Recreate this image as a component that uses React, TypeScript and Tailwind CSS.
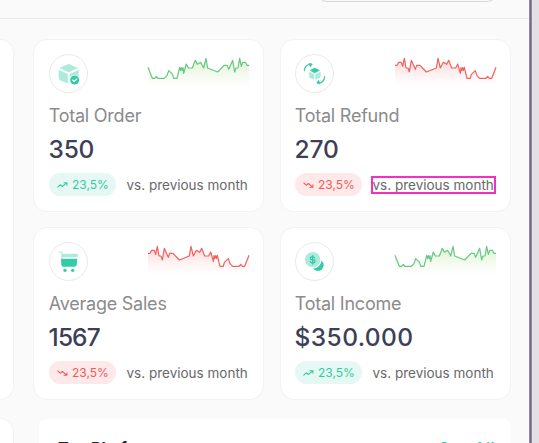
import type { ReactNode } from 'react';

const RISING: [number, number][] = [
  [24, 97], [37, 130], [44, 130], [49, 124], [54, 130], [73, 130], [81, 122], [86, 107], [98, 118], [101, 130],
  [111, 130], [119, 97], [122, 107], [124, 98], [127, 106], [129, 98], [131, 115], [139, 87], [145, 99], [157, 99],
  [166, 76], [172, 88], [182, 82], [191, 99], [198, 70], [203, 99], [233, 111], [252, 91], [262, 91], [266, 103],
  [278, 76], [284, 111], [288, 99], [294, 99], [299, 70], [304, 94], [308, 82], [316, 82], [321, 91], [327, 91],
];
const FALLING = RISING.map(([x, y]): [number, number] => [351 - x, y]).reverse();

function Sparkline({ up, id }: { up: boolean; id: string }) {
  const line = (up ? RISING : FALLING).map((p) => p.join(',')).join(' ');
  return (
    <svg className="mt-[3px] h-[30px] w-[101px] overflow-visible" viewBox="24 66 303 90">
      <defs>
        <linearGradient id={id} x1="0" y1="0" x2="0" y2="1">
          <stop offset="0" stopColor={up ? '#d9edc0' : '#fbc9c9'} stopOpacity="0.85" />
          <stop offset="1" stopColor={up ? '#e8f5dc' : '#fdeaea'} stopOpacity="0" />
        </linearGradient>
      </defs>
      <polygon points={`24,156 ${line} 327,156`} fill={`url(#${id})`} />
      <polyline points={line} fill="none" stroke={up ? '#62c982' : '#f0625f'} strokeWidth="3.6" strokeLinejoin="round" />
    </svg>
  );
}

function TrendIcon({ up }: { up: boolean }) {
  return (
    <svg className="h-[8px] w-[11px]" viewBox="0 0 11 8" fill="none" stroke="currentColor" strokeWidth="1.1" strokeLinecap="round" strokeLinejoin="round">
      <g transform={up ? undefined : 'matrix(1 0 0 -1 0 8)'}>
        <path d="M.8 6.2 3.2 3.8 5.4 5.5 9.6 1.9M7 1.7h2.9v2.6" />
      </g>
    </svg>
  );
}

const boxIcon = (
  <svg className="size-[37px]" viewBox="0 0 111 111">
    <g fill="#aeeadb" stroke="#aeeadb" strokeWidth="2" strokeLinejoin="round">
      <path d="M30 39 56 28 82 39 56 51Z" />
      <path d="M27 46 53 58V84L30 75Q27 73 27 70Z" />
      <path d="M85 46 60 58V84L82 75Q85 73 85 70Z" />
    </g>
    <circle cx="74" cy="75" r="15.5" fill="#fff" />
    <circle cx="74" cy="75" r="13.5" fill="#35cba9" />
    <path d="m68 75 4.5 4.5 8-8" fill="none" stroke="#fff" strokeWidth="3.5" strokeLinecap="round" strokeLinejoin="round" />
  </svg>
);

const refundIcon = (
  <svg className="size-[37px]" viewBox="0 0 111 111">
    <path d="M43 46 56 39 70 46 56 54Z" fill="#35cba9" stroke="#35cba9" strokeWidth="2" strokeLinejoin="round" />
    <g fill="#aeeadb" stroke="#aeeadb" strokeWidth="2" strokeLinejoin="round">
      <path d="M40 52 54 58V73L42 68Q40 67 40 64Z" />
      <path d="M73 52 59 58V73L71 68Q73 67 73 64Z" />
    </g>
    <g fill="none" stroke="#35cba9" strokeWidth="3.5" strokeLinecap="round">
      <path d="M25 47C26 36 33 28 44 28M86 65C85 76 78 84 67 84" />
    </g>
    <path d="m39 25 10 2-6 9ZM72 87l-10-3 6-8Z" fill="#35cba9" stroke="#35cba9" strokeWidth="2" strokeLinejoin="round" />
  </svg>
);

const cartIcon = (
  <svg className="size-[37px]" viewBox="0 0 111 111">
    <path d="M27 27H33Q36 28 36 33V46" fill="none" stroke="#aeeadb" strokeWidth="3.5" strokeLinecap="round" />
    <path d="M35 32H80Q84 32 84 36L83 43H35Z" fill="#aeeadb" />
    <path d="M33 47H82L80 66Q79 71 73 71H40Q35 71 34 66Z" fill="#35cba9" />
    <circle cx="45" cy="82" r="5" fill="#35cba9" />
    <circle cx="68" cy="82" r="5" fill="#35cba9" />
  </svg>
);

const coinIcon = (
  <svg className="size-[37px]" viewBox="0 0 111 111">
    <circle cx="66" cy="67" r="17" fill="#35cba9" />
    <circle cx="50" cy="50" r="26.5" fill="#fff" />
    <circle cx="50" cy="50" r="23" fill="#aeeadb" />
    <path d="M56 45Q54 41 50 41C41 41 41 50 50 50S59 60 50 60Q45 60 43 56M50 38V63" fill="none" stroke="#35cba9" strokeWidth="4" strokeLinecap="round" />
  </svg>
);

interface StatProps {
  id: string;
  icon: ReactNode;
  title: string;
  value: string;
  cardClass: string;
  valueClass: string;
  up: boolean;
  selected?: boolean;
}

function StatCard({ id, icon, title, value, cardClass, valueClass, up, selected }: StatProps) {
  return (
    <section className={`h-[172.5px] rounded-[14px] border border-[#f0f3f8] bg-white pt-[14px] ${cardClass}`}>
      <div className="flex h-[39px] justify-between pr-[14px]">
        <div className="flex size-[39px] items-center justify-center rounded-full border border-[#e9e9e9]">{icon}</div>
        <Sparkline id={id} up={up} />
      </div>
      <h2 className="-ml-[0.3px] mt-[11px] h-[24px] whitespace-nowrap text-[18px] leading-[24px] tracking-[-0.23px] text-[#8b8b8b]">{title}</h2>
      <p className={`-ml-[0.4px] mt-[5px] h-[32px] whitespace-nowrap text-[24.5px] font-medium leading-[32px] text-[#3c4056] ${valueClass}`}>{value}</p>
      <div className="mt-[8px] flex h-[23px] items-center">
        <span className={`flex h-[23px] w-[67px] shrink-0 items-center gap-[4px] rounded-full pl-[8px] text-[12px] ${up ? 'bg-[#e5f8f3] text-[#35cba0]' : 'bg-[#fde9e9] text-[#f05b59]'}`}>
          <TrendIcon up={up} />
          <span>23,5%</span>
        </span>
        <span
          className={`ml-[9px] mt-px h-[18px] w-[125px] whitespace-nowrap pl-[1.5px] text-[13.5px] leading-[19px] text-[#696969] ${selected ? 'outline-2 -outline-offset-2 outline-[#f52fc2]' : ''}`}
        >
          vs. previous month
        </span>
      </div>
    </section>
  );
}

export default function App() {
  return (
    <div className="flex h-[443px] w-[539px] overflow-hidden bg-[#e2e0e2] font-['Inter',sans-serif]">
      <div className="flex w-[529px] shrink-0 flex-col bg-[#fafafa]">
        <header className="flex h-[19px] shrink-0 items-start justify-end border-b border-[#e9ebf2] pr-[30px]">
          <div className="-mt-[28px] h-[30px] w-[184px] rounded-[12px] border border-[#d9d9d9] bg-[#fafafa]" />
        </header>
        <div className="mt-[20px] flex">
          <aside className="flex w-[14px] shrink-0 flex-col gap-[18px]">
            <div className="h-[361px] rounded-r-[14px] border-y border-r border-[#f0f3f8] bg-white" />
            <div className="h-[60px] rounded-tr-[14px] border-r border-t border-[#f0f3f8] bg-white" />
          </aside>
          <main className="ml-[19px] w-[478px] shrink-0">
            <div className="grid grid-cols-[231px_231px] gap-x-4 gap-y-[15.5px]">
              <StatCard id="order" icon={boxIcon} title="Total Order" value="350" cardClass="pl-[15px]" valueClass="tracking-[-0.3px]" up />
              <StatCard id="refund" icon={refundIcon} title="Total Refund" value="270" cardClass="pl-[14px]" valueClass="tracking-[-0.2px]" up={false} selected />
              <StatCard id="sales" icon={cartIcon} title="Average Sales" value="1567" cardClass="pl-[15px]" valueClass="tracking-[-0.9px]" up={false} />
              <StatCard id="income" icon={coinIcon} title="Total Income" value="$350.000" cardClass="pl-[14px]" valueClass="tracking-[0.4px]" up />
            </div>
            <section className="ml-[6px] mt-[19.5px] flex h-[60px] items-start justify-between rounded-[8px] bg-white pl-[19px] pr-[16px] pt-[17.5px]">
              <h2 className="text-[16px] font-bold leading-[22px] text-[#252525]">Top Platform</h2>
              <span className="text-[16px] font-medium leading-[22px] tracking-[0.5px] text-[#35cba0]">See All</span>
            </section>
          </main>
        </div>
      </div>
      <div className="w-[3px] shrink-0 border-x border-[#9b8795] bg-[#626c9b]" />
    </div>
  );
}
